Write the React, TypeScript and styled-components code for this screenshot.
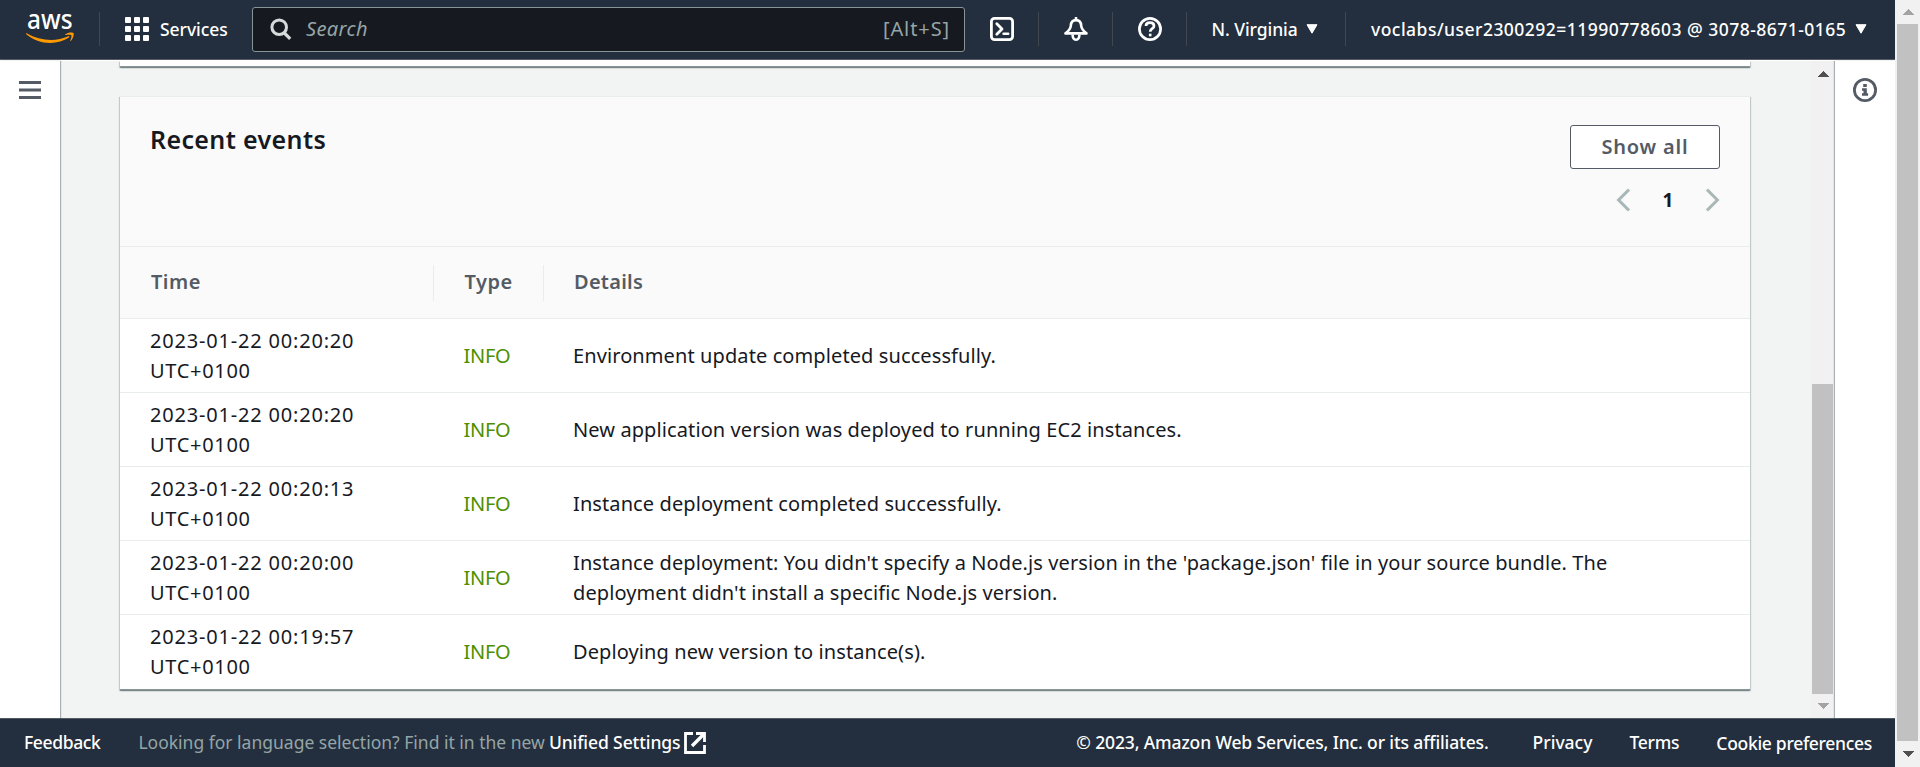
import React from 'react';
import styled, { createGlobalStyle } from 'styled-components';

const GlobalStyle = createGlobalStyle`
  *, *::before, *::after { box-sizing: border-box; }
  body {
    margin: 0;
    overflow: hidden;
    font-family: 'Noto Sans', 'Open Sans', sans-serif;
    font-size: 20px;
    line-height: 30px;
    color: #16191f;
    background: #fff;
  }
`;

const Page = styled.div`
  display: flex;
  width: 1920px;
  height: 767px;
  overflow: hidden;
`;

const Console = styled.div`
  display: flex;
  flex-direction: column;
  width: 1895px;
`;

/* Top navigation */

const TopNav = styled.header`
  display: flex;
  align-items: flex-start;
  flex: none;
  height: 60px;
  background: #232f3e;
  border-bottom: 1px solid #545b64;
  color: #fff;
`;

const Logo = styled.a`
  display: block;
  width: 99px;
  height: 59px;
`;

const LogoText = styled.text`
  font-family: 'Noto Sans', sans-serif;
  font-size: 26.5px;
  font-weight: 500;
  fill: #fff;
`;

const Divider = styled.span`
  flex: none;
  width: 1px;
  height: 34px;
  margin-top: 12px;
  background: #414750;
`;

const NavLabel = styled.span<{ $spacing?: number }>`
  font-size: 17.5px;
  font-weight: 500;
  line-height: 24px;
  white-space: nowrap;
  letter-spacing: ${(p) => p.$spacing ?? 0}px;
`;

const ServicesButton = styled.div`
  display: flex;
  width: 152px;
  padding: 17px 0 0 25px;
  gap: 11px;
`;

const SearchBox = styled.div`
  display: flex;
  width: 713px;
  height: 45px;
  margin-top: 7px;
  padding: 6px 15px 0 17px;
  background: #16191f;
  border: 1px solid #879596;
  border-radius: 3px;
  color: #95a5a6;
`;

const SearchIcon = styled.svg`
  flex: none;
  margin: 4px 14px 0 0;
`;

const Placeholder = styled.span`
  flex: 1;
  font-style: italic;
  letter-spacing: 0.38px;
`;

const Shortcut = styled.span`
  letter-spacing: 0.9px;
  margin-right: -1px;
`;

const NavIcon = styled.div<{ $width: number; $shift?: number }>`
  display: flex;
  justify-content: center;
  width: ${(p) => p.$width}px;
  padding: 17px 0 0 ${(p) => p.$shift ?? 0}px;
`;

const NavMenu = styled.div<{ $width: number; $left: number; $right: number }>`
  display: flex;
  align-items: flex-start;
  justify-content: space-between;
  width: ${(p) => p.$width}px;
  padding: 17px ${(p) => p.$right}px 0 ${(p) => p.$left}px;
`;

const CaretIcon = styled.svg`
  flex: none;
  margin-top: 7px;
`;

/* Body */

const Body = styled.div`
  display: flex;
  flex: 1;
  min-height: 0;
  padding-top: 1px;
  background: #fff;
`;

const SideRail = styled.aside<{ $side: 'left' | 'right' }>`
  flex: none;
  position: relative;
  display: flex;
  justify-content: center;
  width: 60px;
  background: #fff;
  padding-top: ${(p) => (p.$side === 'left' ? 19 : 17)}px;
  box-shadow: ${(p) => (p.$side === 'left' ? '1px' : '-1px')} 0 1px 0 rgba(0, 28, 36, 0.3);
`;

const Content = styled.main`
  flex: 1;
  min-width: 0;
  overflow: hidden;
  padding: 0 61px 0 60px;
  background: #f2f3f3;
`;

const cardShadow = `
  0 1px 1px 0 rgba(0, 28, 36, 0.3),
  1px 1px 1px 0 rgba(0, 28, 36, 0.15),
  -1px 1px 1px 0 rgba(0, 28, 36, 0.15)
`;

const PreviousCard = styled.div`
  height: 6px;
  background: #fff;
  border-bottom: 1px solid #879596;
  box-shadow: ${cardShadow};
`;

const Card = styled.section`
  margin-top: 29px;
  background: #fff;
  border-top: 1px solid #eaeded;
  border-bottom: 1px solid #879596;
  box-shadow: ${cardShadow};
`;

const CardHeader = styled.div`
  display: flex;
  justify-content: space-between;
  height: 149px;
  padding: 28px 30px 0;
  background: #fafafa;
`;

const Title = styled.h2`
  margin: 0;
  font-size: 25px;
  line-height: 28px;
  font-weight: 600;
  letter-spacing: 0.37px;
`;

const Actions = styled.div`
  display: flex;
  flex-direction: column;
  align-items: flex-end;
  gap: 16px;
`;

const Button = styled.button`
  width: 150px;
  height: 44px;
  padding: 0;
  font: 600 20px/30px 'Noto Sans', sans-serif;
  letter-spacing: 0.83px;
  color: #545b64;
  background: #fff;
  border: 1px solid #545b64;
  border-radius: 3px;
`;

const Pagination = styled.div`
  display: flex;
  align-items: center;
  justify-content: space-between;
  width: 104px;
  height: 30px;
  font-weight: 700;
  font-size: 19px;
`;

const rowColumns = '314px 110px 1fr';

const TableHead = styled.div`
  display: grid;
  grid-template-columns: ${rowColumns};
  align-items: center;
  height: 73px;
  background: #fafafa;
  border-top: 1px solid #eaeded;
  border-bottom: 1px solid #eaeded;
`;

const HeadCell = styled.div<{ $left: number; $spacing: number; $last?: boolean }>`
  height: 36px;
  padding: 2px 0 0 ${(p) => p.$left}px;
  line-height: 30px;
  font-weight: 600;
  letter-spacing: ${(p) => p.$spacing}px;
  color: #545b64;
  border-right: ${(p) => (p.$last ? '0' : '1px solid #eaeded')};
`;

const Row = styled.div`
  display: grid;
  grid-template-columns: ${rowColumns};
  align-items: center;
  height: 74px;
  padding-top: 1px;
  border-bottom: 1px solid #eaeded;

  &:last-child {
    border-bottom-color: #fff;
  }
`;

const TimeCell = styled.div`
  padding-left: 30px;
  letter-spacing: 0.81px;
`;

const Zone = styled.div`
  letter-spacing: 0.68px;
`;

const TypeCell = styled.div`
  padding-left: 29.5px;
  letter-spacing: -0.3px;
  color: #4f8f00;
`;

const DetailsCell = styled.div`
  padding: 0 100px 0 29px;
  letter-spacing: 0.1px;
`;

const Line = styled.div`
  white-space: nowrap;
`;

/* Scroll bars */

const ScrollTrack = styled.div<{ $width: number; $top: number; $bottom: number }>`
  flex: none;
  display: flex;
  flex-direction: column;
  align-items: center;
  width: ${(p) => p.$width}px;
  padding: ${(p) => p.$top}px 2px ${(p) => p.$bottom}px ${(p) => p.$width - 23}px;
  background: #f1f1f1;
`;

const Thumb = styled.div<{ $start: number; $end: number }>`
  flex: 1;
  width: 21px;
  margin: ${(p) => p.$start}px 0 ${(p) => p.$end}px;
  background: #c1c1c1;
`;

/* Footer */

const Footer = styled.footer`
  display: flex;
  flex: none;
  height: 49px;
  padding: 11px 23px 0 24px;
  background: #232f3e;
  border-top: 1px solid #545b64;
  color: #fff;
`;

const FooterText = styled.span<{ $spacing?: number; $muted?: boolean; $left?: number; $drop?: number }>`
  font-size: 17.5px;
  font-weight: ${(p) => (p.$muted ? 400 : 500)};
  line-height: 24px;
  white-space: nowrap;
  letter-spacing: ${(p) => p.$spacing ?? 0}px;
  color: ${(p) => (p.$muted ? '#95a5a6' : '#fff')};
  margin-left: ${(p) => p.$left ?? 0}px;
  padding-top: ${(p) => p.$drop ?? 0}px;
`;

const FooterGroup = styled.div`
  display: flex;
  margin-left: auto;
`;

const ExternalIcon = styled.svg`
  flex: none;
  margin: 2px 0 0 4px;
`;

const Caret = () => (
  <CaretIcon width="12" height="10" viewBox="0 0 12 10">
    <path d="M1 0.7h10L6 9.2z" fill="#fff" stroke="#fff" strokeWidth="1" strokeLinejoin="round" />
  </CaretIcon>
);

const ScrollArrow = ({ up, color }: { up?: boolean; color: string }) => (
  <svg width="12" height="6" viewBox="0 0 12 6" shapeRendering="crispEdges">
    <path d={up ? 'M0 6L6 0L12 6z' : 'M0 0L6 6L12 0z'} fill={color} />
  </svg>
);

interface EventItem {
  time: string;
  details: string[];
}

const events: EventItem[] = [
  { time: '2023-01-22 00:20:20', details: ['Environment update completed successfully.'] },
  { time: '2023-01-22 00:20:20', details: ['New application version was deployed to running EC2 instances.'] },
  { time: '2023-01-22 00:20:13', details: ['Instance deployment completed successfully.'] },
  {
    time: '2023-01-22 00:20:00',
    details: [
      "Instance deployment: You didn't specify a Node.js version in the 'package.json' file in your source bundle. The",
      "deployment didn't install a specific Node.js version.",
    ],
  },
  { time: '2023-01-22 00:19:57', details: ['Deploying new version to instance(s).'] },
];

const dots = [0, 9, 18];

export default function App() {
  return (
    <>
      <GlobalStyle />
      <Page>
        <Console>
          <TopNav>
            <Logo>
              <svg width="99" height="59" viewBox="0 0 99 59">
                <LogoText x="27" y="29" textLength="45.5" lengthAdjust="spacingAndGlyphs">aws</LogoText>
                <path d="M26.6 33.2C40 41 56 42 68.2 36.2C69.2 35.8 69.8 36.8 69 37.5C57 45.6 38 44.6 26.3 34.2C25.8 33.6 26 33 26.6 33.2z" fill="#f90" />
                <path d="M65 34.6C67.5 32.2 72.4 32 73.5 33C74.2 34.3 73.2 38.6 70.8 40.9C70.3 41.2 70 41 70.3 40.4C71 38.6 71.9 36 71.3 35.2C70.6 34.4 67.5 34.7 65.4 35C65 35 64.8 34.8 65 34.6z" fill="#f90" />
              </svg>
            </Logo>
            <Divider />
            <ServicesButton>
              <svg width="24" height="24" viewBox="0 0 24 24" fill="#fff">
                {dots.map((y) => dots.map((x) => <rect key={`${x}-${y}`} x={x} y={y} width="6" height="6" rx="1" />))}
              </svg>
              <NavLabel $spacing={-0.05}>Services</NavLabel>
            </ServicesButton>
            <SearchBox>
              <SearchIcon width="22" height="23" viewBox="0 0 22 23" fill="none" stroke="#d5dbdb" strokeWidth="3">
                <circle cx="9.2" cy="9.2" r="7.3" />
                <path d="M14.4 15L20.2 20.8" strokeWidth="3.2" />
              </SearchIcon>
              <Placeholder>Search</Placeholder>
              <Shortcut>[Alt+S]</Shortcut>
            </SearchBox>
            <NavIcon $width={73} $shift={1}>
              <svg width="24" height="24" viewBox="0 0 24 24" fill="none" stroke="#fff" strokeWidth="2.8">
                <rect x="1.4" y="1.4" width="21.2" height="21.2" rx="3.2" />
                <path d="M6.8 6.8L12 12L6.8 17.2" strokeLinejoin="round" strokeLinecap="round" />
                <path d="M13.6 16.7h4.6" strokeLinecap="round" strokeWidth="2.5" />
              </svg>
            </NavIcon>
            <Divider />
            <NavIcon $width={73} $shift={1}>
              <svg width="24" height="24" viewBox="0 0 24 24" fill="none" stroke="#fff" strokeWidth="2.6" strokeLinejoin="round">
                <path d="M12 0.9V3" strokeLinecap="round" strokeWidth="2.6" />
                <path d="M1.5 16.4H22.5C20 14.5 17.6 12.4 17.2 8.8C17 5 15 3.1 12 3.1C9 3.1 7 5 6.8 8.8C6.4 12.4 4 14.5 1.5 16.4z" />
                <path d="M8.6 17.5C8.6 21.2 9.9 22.7 12 22.7C14.1 22.7 15.4 21.2 15.4 17.5" />
              </svg>
            </NavIcon>
            <Divider />
            <NavIcon $width={73}>
              <svg width="24" height="24" viewBox="0 0 24 24" fill="none" stroke="#fff" strokeWidth="2.7">
                <circle cx="12" cy="12" r="10.6" />
                <path d="M8 8.9C8 6.7 9.6 5.7 12 5.7C14.4 5.7 16 6.8 16 8.9C16 11.8 12.2 11.6 12.2 14.8" />
                <path d="M10.9 18h2.6" />
              </svg>
            </NavIcon>
            <Divider />
            <NavMenu $width={158} $left={24.5} $right={27}>
              <NavLabel $spacing={-0.06}>N. Virginia</NavLabel>
              <Caret />
            </NavMenu>
            <Divider />
            <NavMenu $width={549} $left={25} $right={28}>
              <NavLabel $spacing={0.47}>voclabs/user2300292=11990778603 @ 3078-8671-0165</NavLabel>
              <Caret />
            </NavMenu>
          </TopNav>

          <Body>
            <SideRail $side="left">
              <svg width="22" height="20" viewBox="0 0 22 20" fill="#545b64">
                <path d="M0 1h22v3H0zM0 8.5h22v3H0zM0 16h22v3H0z" />
              </svg>
            </SideRail>
            <Content>
              <PreviousCard />
              <Card>
                <CardHeader>
                  <Title>Recent events</Title>
                  <Actions>
                    <Button>Show all</Button>
                    <Pagination>
                      <svg width="14" height="24" viewBox="0 0 14 24" fill="none" stroke="#aab7b8" strokeWidth="3">
                        <path d="M13 1.6L2.6 12L13 22.4" />
                      </svg>
                      <span>1</span>
                      <svg width="14" height="24" viewBox="0 0 14 24" fill="none" stroke="#aab7b8" strokeWidth="3">
                        <path d="M1 1.6L11.4 12L1 22.4" />
                      </svg>
                    </Pagination>
                  </Actions>
                </CardHeader>
                <TableHead>
                  <HeadCell $left={31} $spacing={0.47}>Time</HeadCell>
                  <HeadCell $left={30.5} $spacing={0.5}>Type</HeadCell>
                  <HeadCell $left={30} $spacing={0.25} $last>Details</HeadCell>
                </TableHead>
                <div>
                  {events.map((event) => (
                    <Row key={event.time + event.details[0]}>
                      <TimeCell>
                        <Line>{event.time}</Line>
                        <Zone>UTC+0100</Zone>
                      </TimeCell>
                      <TypeCell>INFO</TypeCell>
                      <DetailsCell>
                        {event.details.map((line) => (
                          <Line key={line}>{line}</Line>
                        ))}
                      </DetailsCell>
                    </Row>
                  ))}
                </div>
              </Card>
            </Content>
            <ScrollTrack $width={24} $top={10} $bottom={9}>
              <ScrollArrow up color="#505050" />
              <Thumb $start={307} $end={9} />
              <ScrollArrow color="#a3a3a3" />
            </ScrollTrack>
            <SideRail $side="right">
              <svg width="24" height="24" viewBox="0 0 24 24" fill="none" stroke="#545b64" strokeWidth="2.8">
                <circle cx="12" cy="12" r="10.6" />
                <path d="M10.2 6h3.6v3h-3.6zM9 10.3h4.8v5h1.3v2.5H9v-2.5h1.5v-2.5H9z" fill="#545b64" stroke="none" />
              </svg>
            </SideRail>
          </Body>

          <Footer>
            <FooterText $spacing={-0.38}>Feedback</FooterText>
            <FooterText $muted $left={38}>Looking for language selection? Find it in the new</FooterText>
            <FooterText $left={4} $spacing={-0.1}>Unified Settings</FooterText>
            <ExternalIcon width="22" height="22" viewBox="0 0 22 22" fill="none" stroke="#fff" strokeWidth="2.8">
              <path d="M9 1.5H1.5V20.5H20.5V13" />
              <path d="M12 1.5H20.5V10" />
              <path d="M20 2L8 14" strokeWidth="3.4" />
            </ExternalIcon>
            <FooterGroup>
              <FooterText $spacing={-0.13}>© 2023, Amazon Web Services, Inc. or its affiliates.</FooterText>
              <FooterText $left={44} $spacing={0}>Privacy</FooterText>
              <FooterText $left={37} $spacing={-0.25}>Terms</FooterText>
              <FooterText $left={37} $spacing={-0.3} $drop={1}>Cookie preferences</FooterText>
            </FooterGroup>
          </Footer>
        </Console>
        <ScrollTrack $width={25} $top={9} $bottom={10}>
          <ScrollArrow up color="#a3a3a3" />
          <Thumb $start={9} $end={10} />
          <ScrollArrow color="#505050" />
        </ScrollTrack>
      </Page>
    </>
  );
}
